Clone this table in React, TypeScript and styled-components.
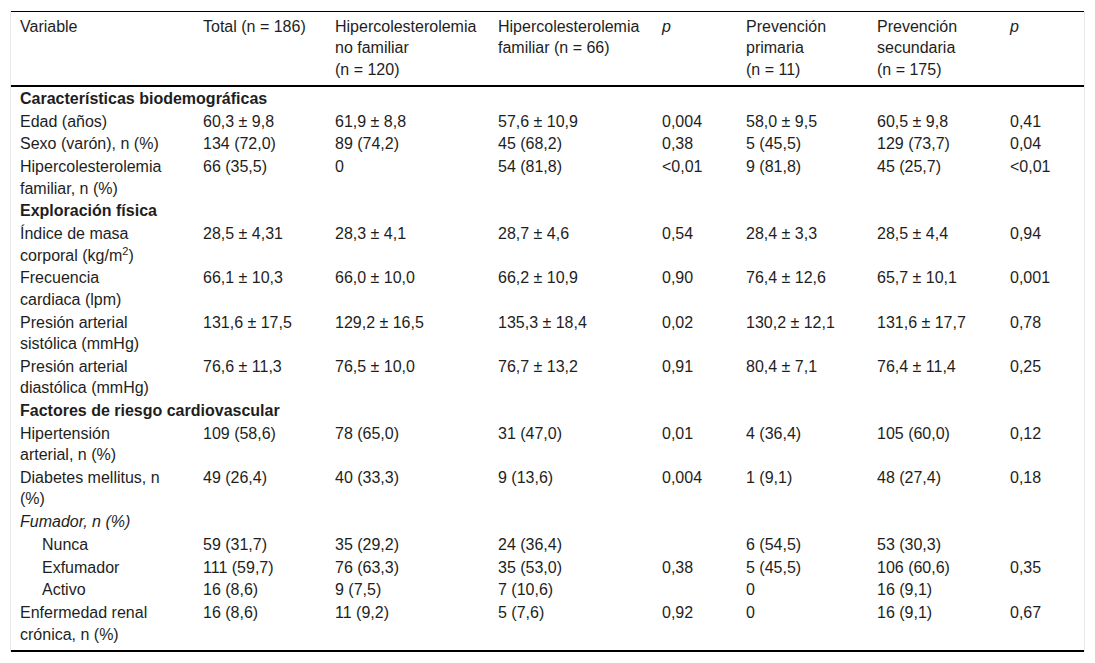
import React from "react";
import styled, { createGlobalStyle } from "styled-components";

const GlobalStyle = createGlobalStyle`
  html, body {
    margin: 0;
    padding: 0;
    background: #fff;
  }
  body {
    font-family: "Liberation Sans", Arial, sans-serif;
    color: #1e1e1e;
  }
`;

type Row =
  | { kind: "section"; label: string; italic?: boolean }
  | { kind: "data"; label: React.ReactNode; values: string[]; indent?: boolean };

// column widths in px, the last column takes what is left
const widths = [183, 132, 163, 164, 84, 131, 133, 0];

const rows: Row[] = [
  { kind: "section", label: "Características biodemográficas" },
  { kind: "data", label: "Edad (años)", values: ["60,3 ± 9,8", "61,9 ± 8,8", "57,6 ± 10,9", "0,004", "58,0 ± 9,5", "60,5 ± 9,8", "0,41"] },
  { kind: "data", label: "Sexo (varón), n (%)", values: ["134 (72,0)", "89 (74,2)", "45 (68,2)", "0,38", "5 (45,5)", "129 (73,7)", "0,04"] },
  { kind: "data", label: "Hipercolesterolemia familiar, n (%)", values: ["66 (35,5)", "0", "54 (81,8)", "<0,01", "9 (81,8)", "45 (25,7)", "<0,01"] },
  { kind: "section", label: "Exploración física" },
  {
    kind: "data",
    label: (
      <>
        Índice de masa corporal (kg/m<sup>2</sup>)
      </>
    ),
    values: ["28,5 ± 4,31", "28,3 ± 4,1", "28,7 ± 4,6", "0,54", "28,4 ± 3,3", "28,5 ± 4,4", "0,94"],
  },
  { kind: "data", label: "Frecuencia cardiaca (lpm)", values: ["66,1 ± 10,3", "66,0 ± 10,0", "66,2 ± 10,9", "0,90", "76,4 ± 12,6", "65,7 ± 10,1", "0,001"] },
  { kind: "data", label: "Presión arterial sistólica (mmHg)", values: ["131,6 ± 17,5", "129,2 ± 16,5", "135,3 ± 18,4", "0,02", "130,2 ± 12,1", "131,6 ± 17,7", "0,78"] },
  { kind: "data", label: "Presión arterial diastólica (mmHg)", values: ["76,6 ± 11,3", "76,5 ± 10,0", "76,7 ± 13,2", "0,91", "80,4 ± 7,1", "76,4 ± 11,4", "0,25"] },
  { kind: "section", label: "Factores de riesgo cardiovascular" },
  { kind: "data", label: "Hipertensión arterial, n (%)", values: ["109 (58,6)", "78 (65,0)", "31 (47,0)", "0,01", "4 (36,4)", "105 (60,0)", "0,12"] },
  { kind: "data", label: "Diabetes mellitus, n (%)", values: ["49 (26,4)", "40 (33,3)", "9 (13,6)", "0,004", "1 (9,1)", "48 (27,4)", "0,18"] },
  { kind: "section", label: "Fumador, n (%)", italic: true },
  { kind: "data", label: "Nunca", indent: true, values: ["59 (31,7)", "35 (29,2)", "24 (36,4)", "", "6 (54,5)", "53 (30,3)", ""] },
  { kind: "data", label: "Exfumador", indent: true, values: ["111 (59,7)", "76 (63,3)", "35 (53,0)", "0,38", "5 (45,5)", "106 (60,6)", "0,35"] },
  { kind: "data", label: "Activo", indent: true, values: ["16 (8,6)", "9 (7,5)", "7 (10,6)", "", "0", "16 (9,1)", ""] },
  { kind: "data", label: "Enfermedad renal crónica, n (%)", values: ["16 (8,6)", "11 (9,2)", "5 (7,6)", "0,92", "0", "16 (9,1)", "0,67"] },
];

// "(n = x)" groups are kept together with non-breaking spaces
const headers: { text: string; italic?: boolean; tight?: boolean }[] = [
  { text: "Variable" },
  { text: "Total (n\u00a0=\u00a0186)", tight: true },
  { text: "Hipercolesterolemia no familiar (n\u00a0=\u00a0120)" },
  { text: "Hipercolesterolemia familiar (n\u00a0=\u00a066)" },
  { text: "p", italic: true },
  { text: "Prevención primaria (n\u00a0=\u00a011)" },
  { text: "Prevención secundaria (n\u00a0=\u00a0175)" },
  { text: "p", italic: true },
];

const Frame = styled.div`
  margin: 11px 10px 0;
  border-left: 1px solid #e8e8e8;
  border-right: 1px solid #e8e8e8;
`;

const Table = styled.table`
  width: 100%;
  table-layout: fixed;
  border-collapse: collapse;
  font-family: "Liberation Sans", Arial, sans-serif;
  font-size: 16px;
  color: #1e1e1e;
  border-top: 1px solid #000;
  border-bottom: 2px solid #000;
`;

const HeadCell = styled.th<{ $italic?: boolean; $tight?: boolean }>`
  text-align: left;
  vertical-align: top;
  font-weight: normal;
  font-style: ${p => (p.$italic ? "italic" : "normal")};
  line-height: 21.4px;
  padding: 4px ${p => (p.$tight ? "8px" : "24px")} 5px 9px;
  border-bottom: 2px solid #000;
`;

const SectionCell = styled.td<{ $italic?: boolean }>`
  text-align: left;
  font-weight: ${p => (p.$italic ? "normal" : "bold")};
  font-style: ${p => (p.$italic ? "italic" : "normal")};
  line-height: 21.4px;
  padding: 0.7px 9px;
`;

const Cell = styled.td<{ $indent?: boolean; $label?: boolean }>`
  vertical-align: top;
  line-height: 21.4px;
  padding: 0.7px ${p => (p.$label ? "31px" : "8px")} 0.7px
    ${p => (p.$indent ? "31px" : "9px")};

  sup {
    font-size: 11px;
    line-height: 0;
    vertical-align: 6px;
  }
`;

const BodyRow = styled.tr`
  &:last-child td {
    padding-bottom: 5px;
  }
`;

export default function App() {
  return (
    <>
      <GlobalStyle />
      <Frame>
        <Table>
          <colgroup>
            {widths.map((w, i) => (
              <col key={i} style={w ? { width: w } : undefined} />
            ))}
          </colgroup>
          <thead>
            <tr>
              {headers.map((h, i) => (
                <HeadCell key={i} $italic={h.italic} $tight={h.tight}>
                  {h.text}
                </HeadCell>
              ))}
            </tr>
          </thead>
          <tbody>
            {rows.map((r, i) =>
              r.kind === "section" ? (
                <BodyRow key={i}>
                  <SectionCell colSpan={8} $italic={r.italic}>
                    {r.label}
                  </SectionCell>
                </BodyRow>
              ) : (
                <BodyRow key={i}>
                  <Cell $label $indent={r.indent}>
                    {r.label}
                  </Cell>
                  {r.values.map((v, j) => (
                    <Cell key={j}>{v}</Cell>
                  ))}
                </BodyRow>
              )
            )}
          </tbody>
        </Table>
      </Frame>
    </>
  );
}
